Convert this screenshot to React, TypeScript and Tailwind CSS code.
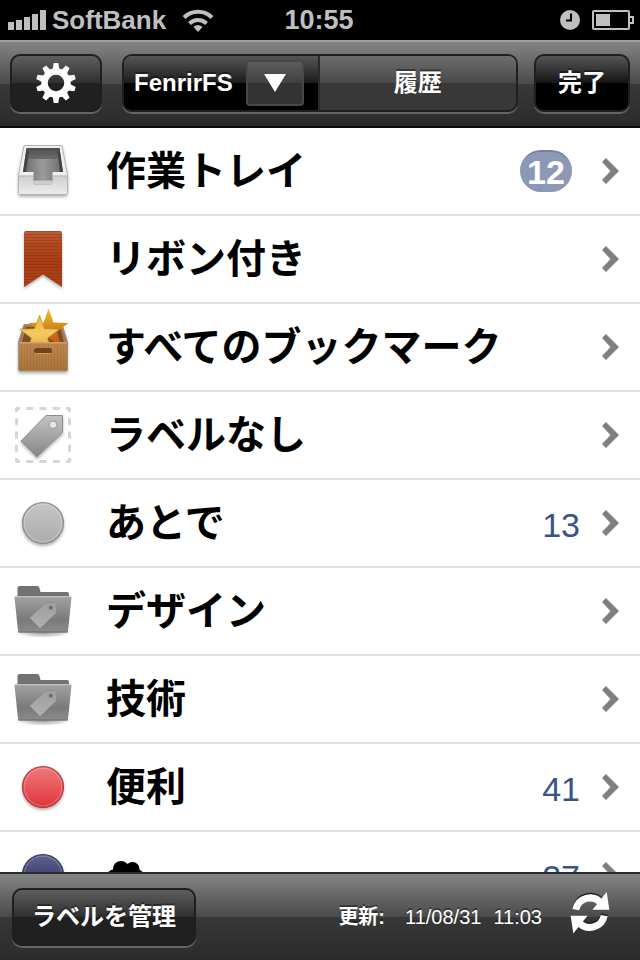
import type { ReactNode } from 'react';

const DISC_COLORS = {
  gray: { top: '#c6c6c6', bottom: '#acacac', edge: '#8c8c8c' },
  red: { top: '#ee7a7c', bottom: '#e0343a', edge: '#b43a40' },
  navy: { top: '#62628e', bottom: '#25255c', edge: '#3a3a66' },
};

function IconBox({ children }: { children: ReactNode }) {
  return (
    <svg className="h-[86px] w-16 shrink-0" viewBox="0 0 64 86" aria-hidden="true">
      <defs>
        <filter id="drop" x="-20%" y="-20%" width="140%" height="150%">
          <feDropShadow dx="0" dy="2" stdDeviation="1.5" floodColor="#000" floodOpacity="0.3" />
        </filter>
      </defs>
      {children}
    </svg>
  );
}

function TrayIcon() {
  return (
    <IconBox>
      <defs>
        <linearGradient id="trayFront" x1="0" y1="0" x2="0" y2="1">
          <stop offset="0" stopColor="#cfcfcf" />
          <stop offset="1" stopColor="#ededed" />
        </linearGradient>
        <linearGradient id="trayFloor" x1="0" y1="0" x2="1" y2="0">
          <stop offset="0" stopColor="#6a6a6a" />
          <stop offset="0.5" stopColor="#9b9b9b" />
          <stop offset="1" stopColor="#6a6a6a" />
        </linearGradient>
        <linearGradient id="trayBack" x1="0" y1="0" x2="0" y2="1">
          <stop offset="0" stopColor="#4e4e4e" />
          <stop offset="1" stopColor="#6c6c6c" />
        </linearGradient>
      </defs>
      <path d="M12 17.500H50L55.500 47V64Q55.500 66.500 53 66.500H9Q6.500 66.500 6.500 64V47Z" fill="#efefef" stroke="#b4b4b4" filter="url(#drop)" />
      <path d="M7 48.500H55V64Q55 66 53 66H9Q7 66 7 64Z" fill="url(#trayFront)" />
      <path d="M7 48H21M41 48H55" stroke="#a8a8a8" />
      <path d="M14.500 20H47.500L51 44H40.500V54.500Q40.500 56.500 38.500 56.500H23.500Q21.500 56.500 21.500 54.500V44H11Z" fill="url(#trayFloor)" />
      <path d="M15 20H47.500V31H15Z" fill="url(#trayBack)" />
      <path d="M14.500 20L11 44H14L17 24Z" fill="#444" />
      <path d="M47.500 20L51 44H48L45.500 24Z" fill="#444" />
      <path d="M21.500 52.500H40.500V55Q40.500 56.500 39 56.500H23Q21.500 56.500 21.500 55Z" fill="#cccccc" />
    </IconBox>
  );
}

function RibbonIcon() {
  return (
    <IconBox>
      <defs>
        <linearGradient id="ribbon" x1="0" y1="0" x2="0" y2="1">
          <stop offset="0" stopColor="#bd5c36" />
          <stop offset="0.250" stopColor="#b24a20" />
          <stop offset="0.550" stopColor="#ab3c12" />
          <stop offset="1" stopColor="#a64420" />
        </linearGradient>
        <pattern id="weave" width="4" height="3" patternUnits="userSpaceOnUse">
          <rect width="4" height="1" fill="#5c1c00" opacity="0.220" />
        </pattern>
      </defs>
      <path d="M12 17Q12 15 14 15H48Q50 15 50 17V71L31 58.500L12 71Z" fill="url(#ribbon)" filter="url(#drop)" />
      <path d="M12 17Q12 15 14 15H48Q50 15 50 17V71L31 58.500L12 71Z" fill="url(#weave)" />
    </IconBox>
  );
}

function StarBoxIcon() {
  return (
    <IconBox>
      <defs>
        <linearGradient id="boxFront" x1="0" y1="0" x2="0" y2="1">
          <stop offset="0" stopColor="#bd874e" />
          <stop offset="1" stopColor="#a9733c" />
        </linearGradient>
        <linearGradient id="starFront" x1="0" y1="0" x2="0" y2="1">
          <stop offset="0" stopColor="#e8b23c" />
          <stop offset="0.500" stopColor="#f3cb63" />
          <stop offset="1" stopColor="#e2a03d" />
        </linearGradient>
        <linearGradient id="starBack" x1="0" y1="0" x2="0" y2="1">
          <stop offset="0" stopColor="#ecc52c" />
          <stop offset="0.400" stopColor="#d8931c" />
          <stop offset="0.700" stopColor="#cb6a1a" />
          <stop offset="1" stopColor="#c7511a" />
        </linearGradient>
        <pattern id="grain" width="3" height="4" patternUnits="userSpaceOnUse">
          <rect width="1" height="4" fill="#6b3f12" opacity="0.120" />
        </pattern>
        <clipPath id="aboveBox"><rect x="0" y="0" width="64" height="38" /></clipPath>
      </defs>
      <path d="M12 20.500H50L55.500 38V65.500Q55.500 67 54 67H8Q6.500 67 6.500 65.500V38Z" fill="#ad7a45" stroke="#9b9289" filter="url(#drop)" />
      <path d="M14 23H48L52 38H10Z" fill="#7b5027" />
      <g clipPath="url(#aboveBox)">
        <path d="M36.500 4.500L41.500 18.600L56.500 19L44.800 28L49 42L36.500 34L24 42L28.400 28L16.500 19L31.700 18.600Z" fill="url(#starBack)" />
        <path d="M27.500 11L32.500 24.800L47.300 25.300L35.600 34.100L39.800 48.500L27.500 40L15.200 48.500L19.400 34.100L7.700 25.300L22.500 24.800Z" fill="url(#starFront)" stroke="#c98d2a" strokeWidth="0.600" />
      </g>
      <path d="M7 38H55V65Q55 66.500 53.500 66.500H8.500Q7 66.500 7 65Z" fill="url(#boxFront)" />
      <path d="M7 40H55V66H7Z" fill="url(#grain)" />
      <path d="M7 38.800H55" stroke="#d3a06a" strokeWidth="1.500" />
      <rect x="22" y="44" width="18" height="5" rx="2.500" fill="#70451d" />
      <path d="M24 49.500H38" stroke="#cf9c66" />
    </IconBox>
  );
}

function TagIcon() {
  return (
    <IconBox>
      <defs>
        <linearGradient id="tag" x1="0" y1="0" x2="0" y2="1">
          <stop offset="0" stopColor="#c4c4c4" />
          <stop offset="1" stopColor="#858585" />
        </linearGradient>
      </defs>
      <path d="M4.500 16.500H57.500V69.500H4.500Z" fill="none" stroke="#d6d6d6" strokeWidth="3" strokeLinejoin="round" strokeDasharray="7 6.250" strokeDashoffset="3.500" />
      <path d="M34 23.500H50.500V40.500L25 65L9 49Z" fill="url(#tag)" stroke="#8f8f8f" strokeLinejoin="round" filter="url(#drop)" />
      <circle cx="41" cy="32.700" r="3.800" fill="#e6e6e6" stroke="#9c9c9c" />
    </IconBox>
  );
}

function DiscIcon({ color }: { color: keyof typeof DISC_COLORS }) {
  const { top, bottom, edge } = DISC_COLORS[color];
  return (
    <IconBox>
      <defs>
        <linearGradient id={`disc-${color}`} x1="0" y1="0" x2="0" y2="1">
          <stop offset="0" stopColor={top} />
          <stop offset="1" stopColor={bottom} />
        </linearGradient>
      </defs>
      <circle cx="31" cy="43" r="20.400" fill={`url(#disc-${color})`} stroke={edge} strokeWidth="1.300" filter="url(#drop)" />
      <circle cx="31" cy="43" r="18.800" fill="none" stroke="#fff" strokeOpacity="0.200" strokeWidth="1.200" />
    </IconBox>
  );
}

function FolderIcon() {
  return (
    <IconBox>
      <defs>
        <linearGradient id="folder" x1="0" y1="0" x2="0" y2="1">
          <stop offset="0" stopColor="#a3a3a3" />
          <stop offset="0.650" stopColor="#7a7a7a" />
          <stop offset="1" stopColor="#8b8b8b" />
        </linearGradient>
        <linearGradient id="folderTag" x1="0" y1="0" x2="0" y2="1">
          <stop offset="0" stopColor="#9d9d9d" />
          <stop offset="1" stopColor="#b2b2b2" />
        </linearGradient>
        <radialGradient id="folderShade">
          <stop offset="0" stopColor="#000" stopOpacity="0.450" />
          <stop offset="1" stopColor="#000" stopOpacity="0" />
        </radialGradient>
      </defs>
      <ellipse cx="31" cy="64" rx="29" ry="6" fill="url(#folderShade)" />
      <path d="M5.500 34V20Q5.500 18 7.500 18H25.500Q27 18 27.500 20L28.500 24H55Q57 24 57 26V34Z" fill="#727272" />
      <path d="M2.500 29.500Q2.500 28 4 28H58Q59.500 28 59.500 29.500L56 63Q56 64.500 54.500 64.500H7.500Q6 64.500 6 63Z" fill="url(#folder)" />
      <path d="M3 28.700H59" stroke="#c2c2c2" strokeWidth="1.300" />
      <path d="M6.500 64H55.500" stroke="#6a6a6a" />
      <path d="M34 34.500H44.500V44.500L28 60.500L17.700 50Z" fill="url(#folderTag)" stroke="#8d8d8d" strokeWidth="0.800" />
      <circle cx="38.800" cy="39.700" r="2" fill="#6f6f6f" />
    </IconBox>
  );
}

function CloudGlyph() {
  return (
    <svg className="h-10 w-10" viewBox="0 0 40 40" role="img" aria-label="cloud">
      <g fill="#000">
        <circle cx="15" cy="14" r="8" />
        <circle cx="26.500" cy="14" r="7" />
        <circle cx="7.500" cy="21" r="6.500" />
        <circle cx="31.500" cy="21" r="6.500" />
        <rect x="6" y="14" width="27" height="16" rx="7" />
      </g>
    </svg>
  );
}

function Chevron() {
  return (
    <svg className="h-7 w-[18px] shrink-0" viewBox="0 0 18 28" aria-hidden="true">
      <path d="M0 5L4 1L17 14L4 27L0 23L8.500 14Z" fill="#7f7f7f" />
    </svg>
  );
}

function Gear() {
  return (
    <svg className="h-10 w-10" viewBox="-20 -20 40 40" aria-hidden="true">
      <g fill="#fff">
        {[0, 36, 72, 108, 144, 180, 216, 252, 288, 324].map((a) => (
          <path key={a} d="M-2.300 -20H2.300L3.600 -12H-3.600Z" transform={`rotate(${a})`} />
        ))}
      </g>
      <circle r="11.500" fill="none" stroke="#fff" strokeWidth="6.500" />
    </svg>
  );
}

function RefreshArrows() {
  return (
    <svg className="h-[42px] w-10" viewBox="0 0 40 42" aria-hidden="true">
      <g transform="translate(0 -1.500)" fill="none" stroke="#1c1c1c" strokeWidth="7">
        <path d="M5.800 17.700A14.500 14.500 0 0 1 31 11" />
        <path d="M34.200 23.700A14.500 14.500 0 0 1 9 30.400" />
      </g>
      <g fill="none" stroke="#fff" strokeWidth="7">
        <path d="M5.800 17.700A14.500 14.500 0 0 1 31 11" />
        <path d="M34.200 23.700A14.500 14.500 0 0 1 9 30.400" />
      </g>
      <path d="M36.700 0L39.300 17.700H22.500Z" fill="#fff" />
      <path d="M3.300 41.400L0.700 23.700H17.500Z" fill="#fff" />
    </svg>
  );
}

function StatusBar() {
  return (
    <div className="grid h-10 shrink-0 grid-cols-3 items-center bg-black pl-1 pr-[6px] font-bold text-[#bfbfbf]">
      <div className="flex items-center pl-1">
        <svg className="h-5 w-[38px] shrink-0" viewBox="0 0 38 20" fill="#bfbfbf" aria-hidden="true">
          <path d="M0 12h6v8H0zM8 10h6v10H8zM16 7h6v13h-6zM24 4h6v16h-6zM32 0h6v20h-6z" />
        </svg>
        <span className="ml-[6px] text-[26px] leading-10">SoftBank</span>
        <svg className="ml-4 h-6 w-8 shrink-0" viewBox="0 0 32 24" aria-hidden="true">
          <g fill="none" stroke="#bfbfbf" strokeWidth="4">
            <path d="M2 9.500A20 20 0 0 1 30 9.500" />
            <path d="M7.500 15.500A12 12 0 0 1 24.500 15.500" />
          </g>
          <path d="M16 24L11.500 19Q16 15 20.500 19Z" fill="#bfbfbf" />
        </svg>
      </div>
      <div className="text-center text-[27px] leading-10">10:55</div>
      <div className="flex items-center justify-end gap-3">
        <svg className="h-5 w-5" viewBox="0 0 20 20" aria-hidden="true">
          <circle cx="10" cy="10" r="10" fill="#bfbfbf" />
          <path d="M11 3.500V10.500H6" fill="none" stroke="#000" strokeWidth="2" />
        </svg>
        <svg className="h-5 w-[42px]" viewBox="0 0 42 20" aria-hidden="true">
          <rect x="1" y="1" width="36" height="18" rx="1" fill="none" stroke="#bfbfbf" strokeWidth="2" />
          <rect x="4" y="4" width="14" height="12" fill="#bfbfbf" />
          <path d="M37 7h4v6h-4" fill="none" stroke="#bfbfbf" strokeWidth="2" />
        </svg>
      </div>
    </div>
  );
}

type Row = { name: ReactNode; icon: ReactNode; count?: number; badge?: number };

const ROWS: Row[] = [
  { name: '作業トレイ', icon: <TrayIcon />, badge: 12 },
  { name: 'リボン付き', icon: <RibbonIcon /> },
  { name: 'すべてのブックマーク', icon: <StarBoxIcon /> },
  { name: 'ラベルなし', icon: <TagIcon /> },
  { name: 'あとで', icon: <DiscIcon color="gray" />, count: 13 },
  { name: 'デザイン', icon: <FolderIcon /> },
  { name: '技術', icon: <FolderIcon /> },
  { name: '便利', icon: <DiscIcon color="red" />, count: 41 },
  { name: <CloudGlyph />, icon: <DiscIcon color="navy" />, count: 27 },
];

const BUTTON = 'h-[58px] rounded-[10px] border-2 border-[#1f1f1f] shadow-[0_2px_0_rgba(255,255,255,0.25)]';
const BAR = 'bg-[linear-gradient(#848484,#4a4a4a_50%,#383838_50%,#2b2b2b)]';
const DARK_GLOSS = 'bg-[linear-gradient(#5e5e5e,#2f2f2f_50%,#202020_50%,#202020)]';
const CAPTION = 'text-2xl font-bold text-white [text-shadow:0_-2px_0_rgba(0,0,0,0.4)]';

export default function App() {
  return (
    <div className="flex h-screen flex-col overflow-hidden bg-white font-['Liberation_Sans','Noto_Sans_CJK_JP',sans-serif]">
      <StatusBar />

      <header className={`flex h-[88px] shrink-0 items-start border-b-2 border-t-2 border-b-[#0c0c0c] border-t-[#a0a0a0] px-[10px] pt-3 ${BAR}`}>
        <button aria-label="設定" className={`flex w-[92px] items-center justify-center ${BUTTON} ${DARK_GLOSS}`}>
          <Gear />
        </button>
        <div className={`ml-5 flex flex-1 overflow-hidden ${BUTTON}`}>
          <div className="flex shrink-0 items-center bg-[linear-gradient(#555,#1c1c1c_50%,#000_50%,#000)] pl-[10px] pr-[14px]">
            <button className={CAPTION}>FenrirFS</button>
            <button aria-label="一覧を開く" className="ml-[13px] flex h-[46px] w-[58px] items-center justify-center rounded-sm border-2 border-[#484848] bg-[linear-gradient(#5c5c5c,#404040_50%,#333_50%,#333)]">
              <svg className="h-[18px] w-[22px]" viewBox="0 0 22 18" aria-hidden="true">
                <path d="M0 0H22L11 18Z" fill="#fff" />
              </svg>
            </button>
          </div>
          <button className={`flex-1 border-l-2 border-[#2a2a2a] bg-[linear-gradient(#6e6e6e,#484848_50%,#383838_50%,#383838)] ${CAPTION}`}>履歴</button>
        </div>
        <button className={`ml-4 w-24 bg-[linear-gradient(#565656,#141414_50%,#000_50%,#000)] ${BUTTON} ${CAPTION}`}>完了</button>
      </header>

      <main className="min-h-0 flex-1 overflow-hidden">
        <ul>
          {ROWS.map((row, i) => (
            <li key={i} className="border-b-2 border-[#e0e0e0]">
              <a href="#" className="flex h-[86px] items-center pl-3 pr-5 text-black">
                {row.icon}
                <span className="ml-[30px] flex-1 whitespace-nowrap text-[40px] font-bold leading-[60px]">{row.name}</span>
                {row.badge !== undefined && (
                  <span className="mr-[30px] flex h-[42px] w-[52px] items-center justify-center rounded-full border-t-2 border-[#75819d] bg-[#8c98b6] text-[34px] font-bold leading-10 text-white">
                    {row.badge}
                  </span>
                )}
                {row.count !== undefined && (
                  <span className="mr-[22px] pt-1 text-[34px] leading-10 text-[#385487]">{row.count}</span>
                )}
                <Chevron />
              </a>
            </li>
          ))}
        </ul>
      </main>

      <footer className={`flex h-[88px] shrink-0 items-start border-t-2 border-[#2a2a2a] pl-3 pr-[30px] pt-[14px] ${BAR}`}>
        <button className={`w-[184px] ${BUTTON} ${DARK_GLOSS} ${CAPTION}`}>ラベルを管理</button>
        <div className="ml-auto flex h-[58px] items-center text-xl text-white [text-shadow:0_-2px_0_rgba(0,0,0,0.4)]">
          <span className="font-bold">更新:</span>
          <time className="ml-5 flex gap-3">
            <span>11/08/31</span>
            <span>11:03</span>
          </time>
        </div>
        <button aria-label="更新" className="ml-7 mt-1">
          <RefreshArrows />
        </button>
      </footer>
    </div>
  );
}
